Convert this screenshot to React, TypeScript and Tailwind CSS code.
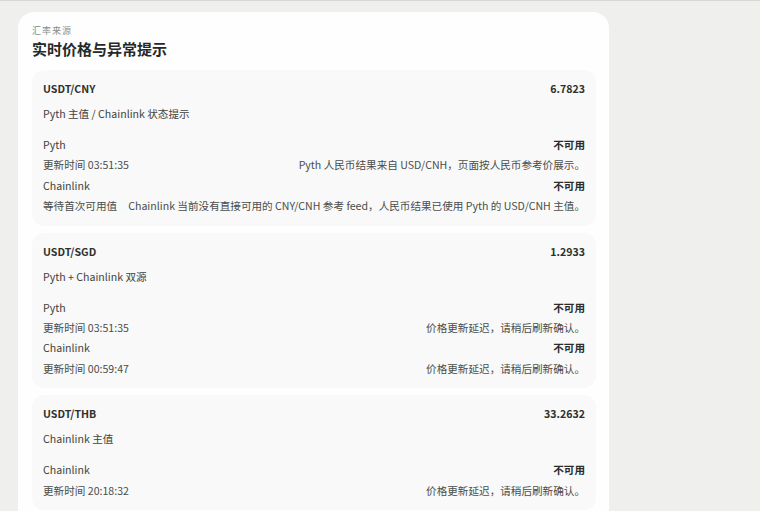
type SourceRow = {
  name: string;
  status: string;
  left: string;
  note: string;
};

type Pair = {
  pair: string;
  price: string;
  mode: string;
  rows: SourceRow[];
};

const DELAY_NOTE = "价格更新延迟，请稍后刷新确认。";

const pairs: Pair[] = [
  {
    pair: "USDT/CNY",
    price: "6.7823",
    mode: "Pyth 主值 / Chainlink 状态提示",
    rows: [
      {
        name: "Pyth",
        status: "不可用",
        left: "更新时间 03:51:35",
        note: "Pyth 人民币结果来自 USD/CNH，页面按人民币参考价展示。",
      },
      {
        name: "Chainlink",
        status: "不可用",
        left: "等待首次可用值",
        note: "Chainlink 当前没有直接可用的 CNY/CNH 参考 feed，人民币结果已使用 Pyth 的 USD/CNH 主值。",
      },
    ],
  },
  {
    pair: "USDT/SGD",
    price: "1.2933",
    mode: "Pyth + Chainlink 双源",
    rows: [
      { name: "Pyth", status: "不可用", left: "更新时间 03:51:35", note: DELAY_NOTE },
      { name: "Chainlink", status: "不可用", left: "更新时间 00:59:47", note: DELAY_NOTE },
    ],
  },
  {
    pair: "USDT/THB",
    price: "33.2632",
    mode: "Chainlink 主值",
    rows: [{ name: "Chainlink", status: "不可用", left: "更新时间 20:18:32", note: DELAY_NOTE }],
  },
];

function PairCard({ data }: { data: Pair }) {
  return (
    <div className="rounded-xl bg-[#f8f9f8] px-[11px] pt-[9px] pb-[9px]">
      <div className="flex items-center justify-between leading-5 text-[10.6px] font-bold text-[#2e312f]">
        <span>{data.pair}</span>
        <span>{data.price}</span>
      </div>
      <p className="mt-[5px] leading-5 text-[10.6px] text-[#3f4240]">{data.mode}</p>
      <div className="mt-[11px]">
        {data.rows.map((row) => (
          <div key={row.name + row.left}>
            <div className="flex items-center justify-between leading-[20.4px] text-[10.6px]">
              <span className="text-[#3f4240]">{row.name}</span>
              <span className="font-bold text-[#2a2d2b]">{row.status}</span>
            </div>
            <div className="flex items-center justify-between gap-2 leading-[20.4px] text-[10.6px] text-[#4a4d4b]">
              <span className="whitespace-nowrap">{row.left}</span>
              <span className="whitespace-nowrap text-right">{row.note}</span>
            </div>
          </div>
        ))}
      </div>
    </div>
  );
}

export default function App() {
  return (
    <div
      className="h-[511px] w-[760px] overflow-hidden border-t border-[#d6d8d5] bg-[#eff0ed]"
      style={{ fontFamily: '"Noto Sans CJK SC", "Noto Sans", sans-serif' }}
    >
      <div className="ml-[18px] mt-[11px] w-[591px] rounded-2xl bg-[#fdfefd] pl-[14px] pr-[13px] pt-3 pb-6">
        {/* Header */}
        <p className="h-[13px] leading-[13px] text-[9px] tracking-[1px] text-[#8a8d8b]">汇率来源</p>
        <h1 className="mt-px leading-[22px] text-[15px] font-bold text-[#262927]">实时价格与异常提示</h1>

        {/* Pairs */}
        <div className="mt-[10px] flex flex-col gap-[7px]">
          {pairs.map((p) => (
            <PairCard key={p.pair} data={p} />
          ))}
        </div>
      </div>
    </div>
  );
}
